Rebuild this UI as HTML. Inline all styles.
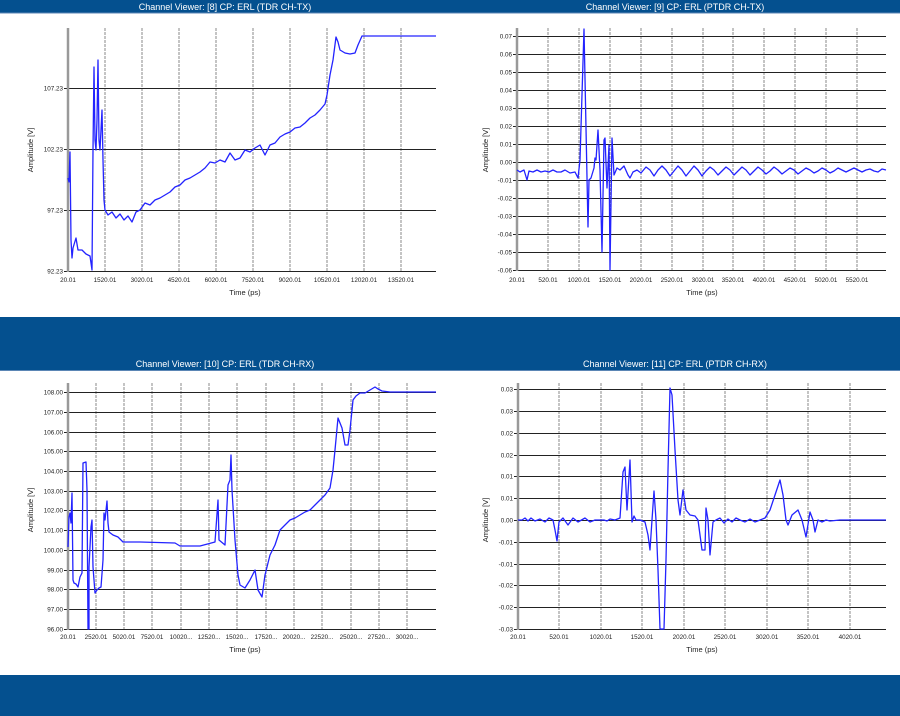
<!DOCTYPE html>
<html><head><meta charset="utf-8"><style>
html,body{margin:0;padding:0;width:900px;height:716px;overflow:hidden;background:#fff}
svg{display:block}
text{font-family:"Liberation Sans",sans-serif}
.t{font-size:9px;fill:#fff}
.tk{font-size:6.3px;fill:#222}
.ax{font-size:7.5px;fill:#222}
.h{stroke:#222;stroke-width:1}
.v{stroke:#888;stroke-width:1;stroke-dasharray:3,1}
.a{stroke:#999;stroke-width:2.5}
.c{fill:none;stroke:#2323ff;stroke-width:1.3;stroke-linejoin:round}
</style></head><body>
<svg width="900" height="716" viewBox="0 0 900 716" xmlns="http://www.w3.org/2000/svg">
<rect x="0" y="0" width="900" height="716" fill="#fff"/>
<rect x="0" y="0" width="900" height="13" fill="#04508f"/>
<rect x="0" y="317" width="900" height="54" fill="#04508f"/>
<rect x="0" y="675" width="900" height="41" fill="#04508f"/>
<line x1="0" y1="13" x2="900" y2="13" stroke="#5b86b5"/>
<line x1="0" y1="370.5" x2="900" y2="370.5" stroke="#5b86b5"/>
<text class="t" x="225" y="10" text-anchor="middle">Channel Viewer: [8] CP: ERL (TDR CH-TX)</text>
<text class="t" x="675" y="10" text-anchor="middle">Channel Viewer: [9] CP: ERL (PTDR CH-TX)</text>
<text class="t" x="225" y="367" text-anchor="middle">Channel Viewer: [10] CP: ERL (TDR CH-RX)</text>
<text class="t" x="675" y="367" text-anchor="middle">Channel Viewer: [11] CP: ERL (PTDR CH-RX)</text>

<!-- TL -->
<g>
<g class="v"><line x1="105" y1="28" x2="105" y2="271"/><line x1="142" y1="28" x2="142" y2="271"/><line x1="179" y1="28" x2="179" y2="271"/><line x1="216" y1="28" x2="216" y2="271"/><line x1="253" y1="28" x2="253" y2="271"/><line x1="290" y1="28" x2="290" y2="271"/><line x1="327" y1="28" x2="327" y2="271"/><line x1="364" y1="28" x2="364" y2="271"/><line x1="401" y1="28" x2="401" y2="271"/></g>
<g class="h"><line x1="64" y1="88.5" x2="436" y2="88.5"/><line x1="64" y1="149.5" x2="436" y2="149.5"/><line x1="64" y1="210.5" x2="436" y2="210.5"/><line x1="64" y1="271.5" x2="436" y2="271.5"/></g>
<line class="a" x1="68" y1="28" x2="68" y2="272"/>
<g class="tk" text-anchor="end"><text x="63" y="90.5">107.23</text><text x="63" y="151.5">102.23</text><text x="63" y="212.5">97.23</text><text x="63" y="273.5">92.23</text></g>
<g class="tk" text-anchor="middle"><text x="68" y="282">20.01</text><text x="105" y="282">1520.01</text><text x="142" y="282">3020.01</text><text x="179" y="282">4520.01</text><text x="216" y="282">6020.01</text><text x="253" y="282">7520.01</text><text x="290" y="282">9020.01</text><text x="327" y="282">10520.01</text><text x="364" y="282">12020.01</text><text x="401" y="282">13520.01</text></g>
<text class="ax" x="245" y="295" text-anchor="middle">Time (ps)</text>
<text class="ax" transform="translate(33,150) rotate(-90)" text-anchor="middle">Amplitude [V]</text>
<polyline class="c" points="68,178 69,182 70,152 71,240 72,258 73,248 76,238 78,250 82,250 86,254 90,256 92,270 93,150 94,67 95,140 96,150 97,120 98,60 99,140 100,150 101,130 102,110 103,160 104,200 105,210 108,215 112,212 116,218 120,214 124,220 128,216 132,222 136,212 140,210 145,203 150,205 155,200 160,198 165,195 170,192 175,187 180,185 185,180 190,178 195,175 200,172 205,168 210,162 215,163 220,160 225,162 230,153 235,160 240,158 245,150 250,152 255,148 260,145 265,155 270,145 275,143 280,137 285,134 290,132 295,128 300,127 305,123 310,118 315,115 320,110 325,104 327,95 330,75 333,60 336,37 338,42 340,50 345,53 350,54 355,53 358,45 362,36 436,36"/>
</g>

<!-- TR -->
<g>
<g class="v"><line x1="548" y1="28" x2="548" y2="271"/><line x1="579" y1="28" x2="579" y2="271"/><line x1="610" y1="28" x2="610" y2="271"/><line x1="641" y1="28" x2="641" y2="271"/><line x1="672" y1="28" x2="672" y2="271"/><line x1="703" y1="28" x2="703" y2="271"/><line x1="733" y1="28" x2="733" y2="271"/><line x1="764" y1="28" x2="764" y2="271"/><line x1="795" y1="28" x2="795" y2="271"/><line x1="826" y1="28" x2="826" y2="271"/><line x1="857" y1="28" x2="857" y2="271"/></g>
<g class="h"><line x1="513" y1="36.5" x2="886" y2="36.5"/><line x1="513" y1="54.5" x2="886" y2="54.5"/><line x1="513" y1="72.5" x2="886" y2="72.5"/><line x1="513" y1="90.5" x2="886" y2="90.5"/><line x1="513" y1="108.5" x2="886" y2="108.5"/><line x1="513" y1="126.5" x2="886" y2="126.5"/><line x1="513" y1="144.5" x2="886" y2="144.5"/><line x1="513" y1="162.5" x2="886" y2="162.5"/><line x1="513" y1="180.5" x2="886" y2="180.5"/><line x1="513" y1="198.5" x2="886" y2="198.5"/><line x1="513" y1="216.5" x2="886" y2="216.5"/><line x1="513" y1="234.5" x2="886" y2="234.5"/><line x1="513" y1="252.5" x2="886" y2="252.5"/><line x1="513" y1="270.5" x2="886" y2="270.5"/></g>
<line class="a" x1="517" y1="28" x2="517" y2="271"/>
<g class="tk" text-anchor="end"><text x="512" y="38.5">0.07</text><text x="512" y="56.5">0.06</text><text x="512" y="74.5">0.05</text><text x="512" y="92.5">0.04</text><text x="512" y="110.5">0.03</text><text x="512" y="128.5">0.02</text><text x="512" y="146.5">0.01</text><text x="512" y="164.5">0.00</text><text x="512" y="182.5">-0.01</text><text x="512" y="200.5">-0.02</text><text x="512" y="218.5">-0.03</text><text x="512" y="236.5">-0.04</text><text x="512" y="254.5">-0.05</text><text x="512" y="272.5">-0.06</text></g>
<g class="tk" text-anchor="middle"><text x="517" y="282">20.01</text><text x="548" y="282">520.01</text><text x="579" y="282">1020.01</text><text x="610" y="282">1520.01</text><text x="641" y="282">2020.01</text><text x="672" y="282">2520.01</text><text x="703" y="282">3020.01</text><text x="733" y="282">3520.01</text><text x="764" y="282">4020.01</text><text x="795" y="282">4520.01</text><text x="826" y="282">5020.01</text><text x="857" y="282">5520.01</text></g>
<text class="ax" x="702" y="295" text-anchor="middle">Time (ps)</text>
<text class="ax" transform="translate(488,150) rotate(-90)" text-anchor="middle">Amplitude [V]</text>
<polyline class="c" points="517,170 520,172 524,170 527,180 529,171 533,172 537,170 541,172 545,171 549,172 553,170 557,172 561,172 565,170 570,173 575,172 578,178 580,160 584,29 588,227 589,180 591,178 594,168 595,158 596,160 598,130 600,170 602,252 604,140 605,138 607,188 609,145 610,270 612,138 614,175 617,168 620,170 624,166 628,175 630,178 633,172 637,170 641,173 646,167 650,170 654,176 658,170 662,166 666,170 670,176 674,171 678,166 682,170 686,176 690,171 694,166 698,170 702,176 706,171 710,167 714,170 718,175 722,171 726,167 730,170 734,175 738,171 742,167 746,170 750,175 754,171 758,167 762,170 766,174 770,171 774,167 778,170 782,174 786,171 790,168 794,170 798,174 802,171 806,168 810,170 814,173 818,171 822,168 826,170 830,173 834,171 838,168 842,170 846,172 850,170 854,168 858,170 862,172 866,170 870,169 874,171 878,172 882,169 886,170"/>
</g>

<!-- BL -->
<g>
<g class="v"><line x1="96" y1="383" x2="96" y2="629"/><line x1="124" y1="383" x2="124" y2="629"/><line x1="152" y1="383" x2="152" y2="629"/><line x1="181" y1="383" x2="181" y2="629"/><line x1="209" y1="383" x2="209" y2="629"/><line x1="237" y1="383" x2="237" y2="629"/><line x1="266" y1="383" x2="266" y2="629"/><line x1="294" y1="383" x2="294" y2="629"/><line x1="322" y1="383" x2="322" y2="629"/><line x1="351" y1="383" x2="351" y2="629"/><line x1="379" y1="383" x2="379" y2="629"/><line x1="407" y1="383" x2="407" y2="629"/></g>
<g class="h"><line x1="64" y1="392.5" x2="436" y2="392.5"/><line x1="64" y1="412.5" x2="436" y2="412.5"/><line x1="64" y1="432.5" x2="436" y2="432.5"/><line x1="64" y1="451.5" x2="436" y2="451.5"/><line x1="64" y1="471.5" x2="436" y2="471.5"/><line x1="64" y1="491.5" x2="436" y2="491.5"/><line x1="64" y1="510.5" x2="436" y2="510.5"/><line x1="64" y1="530.5" x2="436" y2="530.5"/><line x1="64" y1="550.5" x2="436" y2="550.5"/><line x1="64" y1="570.5" x2="436" y2="570.5"/><line x1="64" y1="589.5" x2="436" y2="589.5"/><line x1="64" y1="609.5" x2="436" y2="609.5"/><line x1="64" y1="629.5" x2="436" y2="629.5"/></g>
<line class="a" x1="68" y1="383" x2="68" y2="630"/>
<g class="tk" text-anchor="end"><text x="63" y="394.5">108.00</text><text x="63" y="414.5">107.00</text><text x="63" y="434.5">106.00</text><text x="63" y="453.5">105.00</text><text x="63" y="473.5">104.00</text><text x="63" y="493.5">103.00</text><text x="63" y="512.5">102.00</text><text x="63" y="532.5">101.00</text><text x="63" y="552.5">100.00</text><text x="63" y="572.5">99.00</text><text x="63" y="591.5">98.00</text><text x="63" y="611.5">97.00</text><text x="63" y="631.5">96.00</text></g>
<g class="tk" text-anchor="middle"><text x="68" y="639">20.01</text><text x="96" y="639">2520.01</text><text x="124" y="639">5020.01</text><text x="152" y="639">7520.01</text><text x="181" y="639">10020...</text><text x="209" y="639">12520...</text><text x="237" y="639">15020...</text><text x="266" y="639">17520...</text><text x="294" y="639">20020...</text><text x="322" y="639">22520...</text><text x="351" y="639">25020...</text><text x="379" y="639">27520...</text><text x="407" y="639">30020...</text></g>
<text class="ax" x="245" y="652" text-anchor="middle">Time (ps)</text>
<text class="ax" transform="translate(33,510) rotate(-90)" text-anchor="middle">Amplitude [V]</text>
<polyline class="c" points="68,547 69,517 70,513 71,523 72,493 73,580 74,583 76,584 78,587 80,577 82,573 83,463 86,462 87,490 88,629 89,629 89,567 91,527 92,520 93,567 95,593 97,590 99,588 101,587 103,560 104,513 105,520 107,501 108,523 109,532 113,535 118,537 123,542 140,542 175,543 180,546 200,546 215,542 218,500 219,540 225,545 228,485 230,480 231,455 232,490 235,540 238,575 240,585 245,588 250,580 255,570 258,590 262,597 265,575 270,555 275,545 280,530 285,525 290,520 295,518 300,515 305,512 310,510 315,505 320,500 325,495 330,488 333,470 335,450 338,418 342,428 345,445 348,445 350,430 353,400 356,396 360,393 365,393 370,390 375,387 378,389 382,391 390,392 436,392"/>
</g>

<!-- BR -->
<g>
<g class="v"><line x1="559" y1="383" x2="559" y2="629"/><line x1="601" y1="383" x2="601" y2="629"/><line x1="642" y1="383" x2="642" y2="629"/><line x1="684" y1="383" x2="684" y2="629"/><line x1="725" y1="383" x2="725" y2="629"/><line x1="767" y1="383" x2="767" y2="629"/><line x1="808" y1="383" x2="808" y2="629"/><line x1="850" y1="383" x2="850" y2="629"/></g>
<g class="h"><line x1="514" y1="389.5" x2="886" y2="389.5"/><line x1="514" y1="411.5" x2="886" y2="411.5"/><line x1="514" y1="433.5" x2="886" y2="433.5"/><line x1="514" y1="455.5" x2="886" y2="455.5"/><line x1="514" y1="476.5" x2="886" y2="476.5"/><line x1="514" y1="498.5" x2="886" y2="498.5"/><line x1="514" y1="520.5" x2="886" y2="520.5"/><line x1="514" y1="542.5" x2="886" y2="542.5"/><line x1="514" y1="564.5" x2="886" y2="564.5"/><line x1="514" y1="585.5" x2="886" y2="585.5"/><line x1="514" y1="607.5" x2="886" y2="607.5"/><line x1="514" y1="629.5" x2="886" y2="629.5"/></g>
<line class="a" x1="518" y1="383" x2="518" y2="630"/>
<g class="tk" text-anchor="end"><text x="513" y="391.5">0.03</text><text x="513" y="413.5">0.03</text><text x="513" y="435.5">0.02</text><text x="513" y="457.5">0.02</text><text x="513" y="478.5">0.01</text><text x="513" y="500.5">0.01</text><text x="513" y="522.5">0.00</text><text x="513" y="544.5">-0.01</text><text x="513" y="566.5">-0.01</text><text x="513" y="587.5">-0.02</text><text x="513" y="609.5">-0.02</text><text x="513" y="631.5">-0.03</text></g>
<g class="tk" text-anchor="middle"><text x="518" y="639">20.01</text><text x="559" y="639">520.01</text><text x="601" y="639">1020.01</text><text x="642" y="639">1520.01</text><text x="684" y="639">2020.01</text><text x="725" y="639">2520.01</text><text x="767" y="639">3020.01</text><text x="808" y="639">3520.01</text><text x="850" y="639">4020.01</text></g>
<text class="ax" x="702" y="652" text-anchor="middle">Time (ps)</text>
<text class="ax" transform="translate(488,520) rotate(-90)" text-anchor="middle">Amplitude [V]</text>
<polyline class="c" points="518,520 522,520 525,518 528,521 531,518 535,521 540,519 545,522 549,518 553,520 555,530 557,541 559,522 563,518 568,525 573,518 578,522 585,518 590,522 595,520 600,520 604,520 607,521 610,519 615,520 620,518 623,472 625,467 627,510 630,460 632,522 634,516 636,520 640,520 645,522 648,535 650,550 652,520 654,491 656,520 658,570 660,629 664,629 666,560 668,470 670,388 672,395 675,450 678,500 680,515 683,490 686,510 690,515 695,516 698,520 702,550 705,550 706,508 708,520 710,555 713,522 716,520 720,518 724,523 728,519 732,522 736,518 740,520 745,522 750,519 755,522 760,520 765,518 770,510 775,495 780,480 783,495 786,520 788,525 792,515 798,510 802,520 806,537 810,512 813,520 815,532 818,520 822,522 826,520 830,521 840,520 886,520"/>
</g>
</svg>
</body></html>
